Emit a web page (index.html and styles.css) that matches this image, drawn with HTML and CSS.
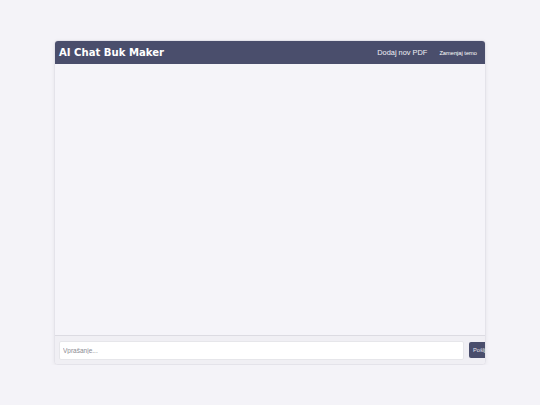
FILE: index.html
```html
<!DOCTYPE html>
<html lang="sl">
<head>
<meta charset="utf-8">
<title>AI Chat Buk Maker</title>
<link rel="stylesheet" href="styles.css">
</head>
<body>
<div class="app">
  <header class="topbar">
    <h1 class="title">AI Chat Buk Maker</h1>
    <nav class="actions">
      <a class="link" href="#">Dodaj nov PDF</a>
      <button class="theme-btn" type="button">Zamenjaj temo</button>
    </nav>
  </header>
  <main class="chat"></main>
  <footer class="composer">
    <input class="question" type="text" placeholder="Vprašanje...">
    <button class="send" type="button">Pošlji</button>
  </footer>
</div>
</body>
</html>
```
FILE: styles.css
```css
html, body {
  margin: 0;
  padding: 0;
  background: #f4f3f8;
  font-family: "Liberation Sans", Arial, sans-serif;
}
.app {
  width: 432px;
  height: 325px;
  margin: 40px auto 0;
  display: flex;
  flex-direction: column;
  border: 1px solid #e4e3ea;
  border-radius: 4px;
  overflow: hidden;
  background: #f5f4f9;
  box-shadow: 0 1px 4px rgba(0,0,0,0.06);
  box-sizing: border-box;
}
.topbar {
  height: 23px;
  flex: none;
  background: #4a4e6c;
  display: flex;
  align-items: center;
  justify-content: space-between;
  padding: 0 8px 0 4px;
}
.title {
  margin: 0;
  font-family: "DejaVu Sans", Verdana, sans-serif;
  font-weight: bold;
  font-size: 10.1px;
  color: #ffffff;
}
.actions {
  display: flex;
  align-items: center;
  gap: 12px;
}
.link {
  color: #f0f0f6;
  text-decoration: none;
  font-size: 7.4px;
}
.theme-btn {
  background: none;
  border: 0;
  padding: 0;
  color: #ffffff;
  font-family: "Liberation Sans", Arial, sans-serif;
  font-size: 5.7px;
}
.chat {
  flex: 1;
}
.composer {
  flex: none;
  height: 28px;
  border-top: 1px solid #dcdbe2;
  background: #f0eff4;
  display: flex;
  align-items: center;
  gap: 5px;
  padding: 0 4px;
}
.question {
  flex: none;
  width: 405px;
  height: 19px;
  box-sizing: border-box;
  border: 1px solid #e6e6ea;
  border-radius: 2px;
  background: #ffffff;
  padding: 0 3px;
  font-family: "Liberation Sans", Arial, sans-serif;
  font-size: 6.5px;
  outline: none;
}
.question::placeholder {
  color: #8a8a92;
}
.send {
  flex: none;
  height: 16px;
  padding: 0 4px;
  border: 0;
  border-radius: 2px;
  background: #4a4e6c;
  color: #e8e8f0;
  font-family: "Liberation Sans", Arial, sans-serif;
  font-size: 5.7px;
}
```
